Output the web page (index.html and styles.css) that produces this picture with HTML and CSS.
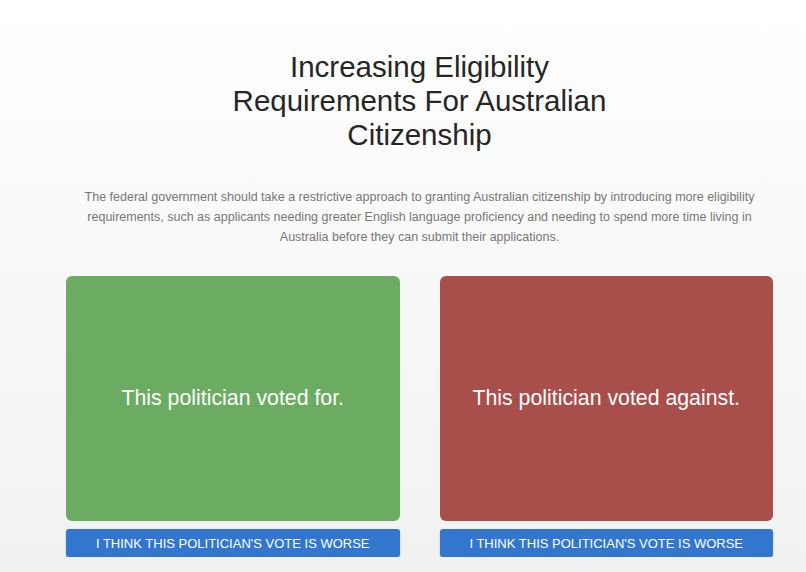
FILE: index.html
```html
<!DOCTYPE html>
<html lang="en">

<head>
  <meta charset="UTF-8">
  <meta name="viewport" content="width=device-width, initial-scale=1.0">
  <title>Vote comparison</title>
  <link rel="stylesheet" href="styles.css">
</head>

<body>
  <div class="page">
    <h1 class="title">Increasing Eligibility Requirements For Australian Citizenship</h1>
    <p class="desc">The federal government should take a restrictive approach to granting Australian citizenship by introducing more eligibility requirements, such as applicants needing greater English language proficiency and needing to spend more time living in Australia before they can submit their applications.</p>

    <div class="choices">
      <div class="choice">
        <div class="card card-for">This politician voted for.</div>
        <button class="pick">I think this politician's vote is worse</button>
      </div>
      <div class="choice">
        <div class="card card-against">This politician voted against.</div>
        <button class="pick">I think this politician's vote is worse</button>
      </div>
    </div>
  </div>
</body>

</html>
```

FILE: styles.css
```css
html {
  min-height: 100%;
  background: linear-gradient(to bottom, #ffffff 0%, #f1f1f1 100%);
}

body {
  margin: 0;
  font-family: "Liberation Sans", Arial, sans-serif;
}

.page {
  width: 707px;
  margin-left: 66px;
  padding-top: 50px;
}

.title {
  width: 420px;
  margin: 0 auto;
  font-size: 29.5px;
  line-height: 34px;
  font-weight: normal;
  color: #262626;
  text-align: center;
}

.desc {
  margin: 35px 6px 0;
  font-size: 12.5px;
  line-height: 20px;
  color: #777;
  text-align: center;
}

.choices {
  display: flex;
  gap: 40px;
  margin-top: 29px;
}

.choice {
  flex: 1;
  display: flex;
  flex-direction: column;
  gap: 8px;
}

.card {
  height: 245px;
  border-radius: 6px;
  display: flex;
  align-items: center;
  justify-content: center;
  color: #fff;
  font-size: 21.3px;
}

.card-for {
  background-color: #6bac62;
}

.card-against {
  background-color: #a84f4c;
}

.pick {
  height: 28px;
  border: none;
  border-radius: 3px;
  background-color: #3277cd;
  color: #fff;
  font-family: "Liberation Sans", Arial, sans-serif;
  font-size: 13px;
  text-transform: uppercase;
  box-shadow: 0 1px 2px rgba(0, 0, 0, 0.25);
  cursor: pointer;
}
```
